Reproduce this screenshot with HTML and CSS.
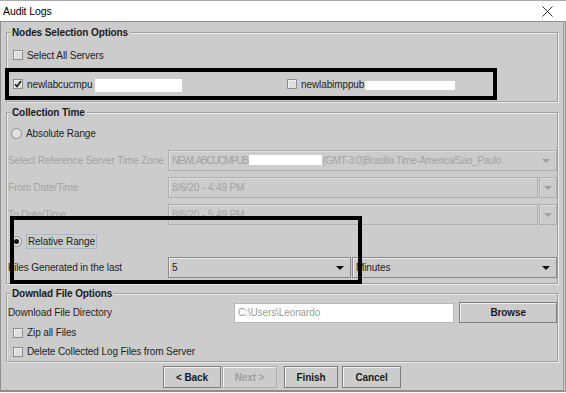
FILE: index.html
```html
<!DOCTYPE html>
<html lang="en">
<head>
    <meta charset="UTF-8">
    <title>Audit Logs</title>
    <link rel="stylesheet" href="styles.css">
</head>
<body>
<div class="window">
    <div class="titlebar">
        <span class="caption">Audit Logs</span>
        <svg class="close" width="11" height="11" viewBox="0 0 11 11">
            <path d="M0.5 0.5L10.5 10.5M10.5 0.5L0.5 10.5" stroke="#333" stroke-width="1" fill="none"/>
        </svg>
    </div>

    <div class="dialog">
        <fieldset class="group nodes">
            <legend>Nodes Selection Options</legend>
            <div class="row check-row"><span class="check"></span>Select All Servers</div>
            <div class="row check-row servers">
                <div class="server">
                    <span class="check">
                        <svg width="8" height="8" viewBox="0 0 8 8"><path d="M1 4.2L3 6.4L7 1" stroke="#1a1a1a" stroke-width="1.6" fill="none"/></svg>
                    </span>newlabcucmpu<span class="redact r1"></span>
                </div>
                <div class="server second"><span class="check"></span>newlabimppub<span class="redact r2"></span></div>
            </div>
        </fieldset>

        <fieldset class="group collection">
            <legend>Collection Time</legend>
            <div class="row radio-row"><span class="radio"></span>Absolute Range</div>
            <div class="field-row tz">
                <span class="label off">Select Reference Server Time Zone</span>
                <div class="combo off grow">
                    <span class="value"><span class="caps">NEWLABCUCMPUB.</span><span class="redact r3"></span><span class="zone">(GMT-3:0)Brasilia Time-America/Sao_Paulo</span></span>
                    <span class="arrow"></span>
                </div>
            </div>
            <div class="field-row">
                <span class="label off">From Date/Time</span>
                <div class="datebox off"><span class="value">8/6/20 - 4:49 PM</span></div>
                <span class="drop"><span class="arrow"></span></span>
            </div>
            <div class="field-row">
                <span class="label off">To Date/Time</span>
                <div class="datebox off"><span class="value">8/6/20 - 5:49 PM</span></div>
                <span class="drop"><span class="arrow"></span></span>
            </div>
            <div class="row radio-row relative"><span class="radio on"></span><span class="focus">Relative Range</span></div>
            <div class="field-row">
                <span class="label">Files Generated in the last</span>
                <div class="combo amount"><span class="value">5</span><span class="arrow"></span></div>
                <div class="combo unit"><span class="value">Minutes</span><span class="arrow"></span></div>
            </div>
        </fieldset>

        <fieldset class="group download">
            <legend>Downlad File Options</legend>
            <div class="field-row dir">
                <span class="label">Download File Directory</span>
                <div class="textbox">C:\Users\Leonardo</div>
                <button class="btn browse">Browse</button>
            </div>
            <div class="row check-row small"><span class="check"></span>Zip all Files</div>
            <div class="row check-row small"><span class="check"></span>Delete Collected Log Files from Server</div>
        </fieldset>

        <div class="actions">
            <button class="btn back">&lt; Back</button>
            <button class="btn next" disabled>Next &gt;</button>
            <button class="btn finish">Finish</button>
            <button class="btn cancel">Cancel</button>
        </div>
    </div>

    <!-- highlight boxes drawn over the dialog -->
    <div class="mark mark-nodes"></div>
    <div class="mark mark-range"></div>
</div>
</body>
</html>
```

FILE: styles.css
```css
body{
    margin: 0;
    background: #fff;
    font-family: "Liberation Sans", Arial, sans-serif;
    font-size: 10px;
    letter-spacing: -0.1px;
    color: #1e1e1e;
}
.window{
    position: relative;
    width: 566px;
    height: 393px;
    overflow: hidden;
}
.titlebar{
    display: flex;
    align-items: center;
    justify-content: space-between;
    height: 20px;
    padding: 0 13px 0 3px;
    border-top: 1px solid #a9a9a9;
    background: #fff;
}
.titlebar .caption{
    font-size: 10.5px;
    color: #000;
}
.dialog{
    box-sizing: border-box;
    height: 371px;
    padding: 0 5px 0 5px;
    background: #cccccc;
    border: 1px solid #8e8e8e;
    border-right: 3px double #9a9a9a;
    border-bottom: 2px solid #8e8e8e;
}

/* titled panels */
.group{
    margin: 4px 0 0;
    padding: 6px 0 7px 1px;
    border: 1px solid #a0a0a0;
    box-shadow: inset 1px 1px 0 #ebebeb, 1px 1px 0 #ebebeb;
    min-width: 0;
}
.group legend{
    margin-left: 2px;
    padding: 0 2px;
    font-weight: bold;
    line-height: 13px;
    color: #1a1a1a;
    background: #cccccc;
}
.collection{
    padding: 4px 0 5px 1px;
}
.download{
    margin-top: 3px;
    padding: 2px 0 0 1px;
}

.row{
    display: flex;
    align-items: center;
    height: 20px;
}
.check-row{
    padding-left: 5px;
}
.radio-row{
    padding-left: 3px;
}
.servers{
    margin-top: 9px;
}
.server{
    display: flex;
    align-items: center;
    width: 274px;
}
.server.second{
    width: auto;
}
.small{
    height: 19px;
}

.check{
    display: inline-flex;
    align-items: center;
    justify-content: center;
    box-sizing: border-box;
    width: 10px;
    height: 10px;
    margin-right: 4px;
    border: 1px solid #8c8c8c;
    background: #dedede;
    box-shadow: inset 1px 1px 0 #f4f4f4;
}
.radio{
    display: inline-flex;
    align-items: center;
    justify-content: center;
    box-sizing: border-box;
    width: 11px;
    height: 11px;
    margin-right: 4px;
    border: 1px solid #8c8c8c;
    border-radius: 50%;
    background: #e2e2e2;
}
.radio.on::after{
    content: "";
    width: 5px;
    height: 5px;
    border-radius: 50%;
    background: #111;
}
.focus{
    padding: 1px 1px;
    border: 1px solid #a9b7cc;
}
.relative{
    margin-top: 6px;
}

.redact{
    display: inline-block;
    background: #fff;
}
.r1{
    width: 87px;
    height: 13px;
    margin-left: 2px;
    margin-top: 3px;
}
.r2{
    width: 90px;
    height: 9px;
    margin-left: 1px;
    margin-top: 2px;
}
.r3{
    width: 73px;
    height: 10px;
    vertical-align: -1px;
}
.caps{
    letter-spacing: -1.3px;
}
.zone{
    letter-spacing: -0.4px;
}

/* label + control rows */
.field-row{
    display: flex;
    align-items: center;
    height: 21px;
    margin-top: 6px;
}
.tz{
    margin-top: 7px;
}
.label{
    flex: none;
    width: 160px;
}
.off{
    color: #a3a3a3;
}
.combo{
    box-sizing: border-box;
    display: flex;
    align-items: center;
    justify-content: space-between;
    height: 21px;
    padding: 0 6px 0 3px;
    border: 1px solid #8a8a8a;
    box-shadow: inset 1px 1px 0 #ececec;
    background: #cccccc;
}
.combo.off{
    border-color: #b0b0b0;
    box-shadow: inset 1px 1px 0 #dcdcdc;
}
.grow{
    flex: 1;
}
.amount{
    width: 183px;
}
.unit{
    width: 205px;
    margin-left: 1px;
}
.value{
    white-space: nowrap;
}
.arrow{
    flex: none;
    width: 0;
    height: 0;
    border-left: 4px solid transparent;
    border-right: 4px solid transparent;
    border-top: 4px solid #111;
}
.off .arrow,
.drop .arrow{
    border-top-color: #a0a0a0;
}
.datebox{
    box-sizing: border-box;
    display: flex;
    align-items: center;
    width: 370px;
    height: 21px;
    padding-left: 3px;
    border: 1px solid #b0b0b0;
    box-shadow: inset 1px 1px 0 #dcdcdc;
}
.drop{
    box-sizing: border-box;
    display: flex;
    align-items: center;
    justify-content: center;
    width: 18px;
    height: 21px;
    margin-left: 1px;
    border: 1px solid #b0b0b0;
    box-shadow: inset 1px 1px 0 #dcdcdc;
}

.dir{
    margin-top: 0;
}
.dir .label{
    width: 226px;
}
.textbox{
    box-sizing: border-box;
    width: 221px;
    height: 20px;
    padding: 3px 3px;
    border: 1px solid #b8b8b8;
    background: #fff;
    color: #9b9b9b;
}

/* buttons */
.btn{
    box-sizing: border-box;
    height: 22px;
    padding: 0;
    border: 1px solid #7d7d7d;
    box-shadow: inset 1px 1px 0 #f2f2f2;
    background: #cccccc;
    font-family: "Liberation Sans", Arial, sans-serif;
    font-size: 10px;
    font-weight: bold;
    letter-spacing: -0.1px;
    color: #1a1a1a;
}
.btn:disabled{
    border-color: #adadad;
    color: #9e9e9e;
}
.browse{
    width: 98px;
    height: 21px;
    margin-left: 5px;
}
.actions{
    display: flex;
    justify-content: center;
    margin-top: 4px;
}
.back{
    width: 58px;
}
.next{
    width: 55px;
    margin-left: 1px;
}
.finish{
    width: 54px;
    margin-left: 7px;
}
.cancel{
    width: 59px;
    margin-left: 4px;
}

/* black annotation boxes */
.mark{
    position: absolute;
    box-sizing: border-box;
    border: 4px solid #000;
}
.mark-nodes{
    left: 5px;
    top: 68px;
    width: 492px;
    height: 32px;
}
.mark-range{
    left: 10px;
    top: 216px;
    width: 352px;
    height: 68px;
}
```
